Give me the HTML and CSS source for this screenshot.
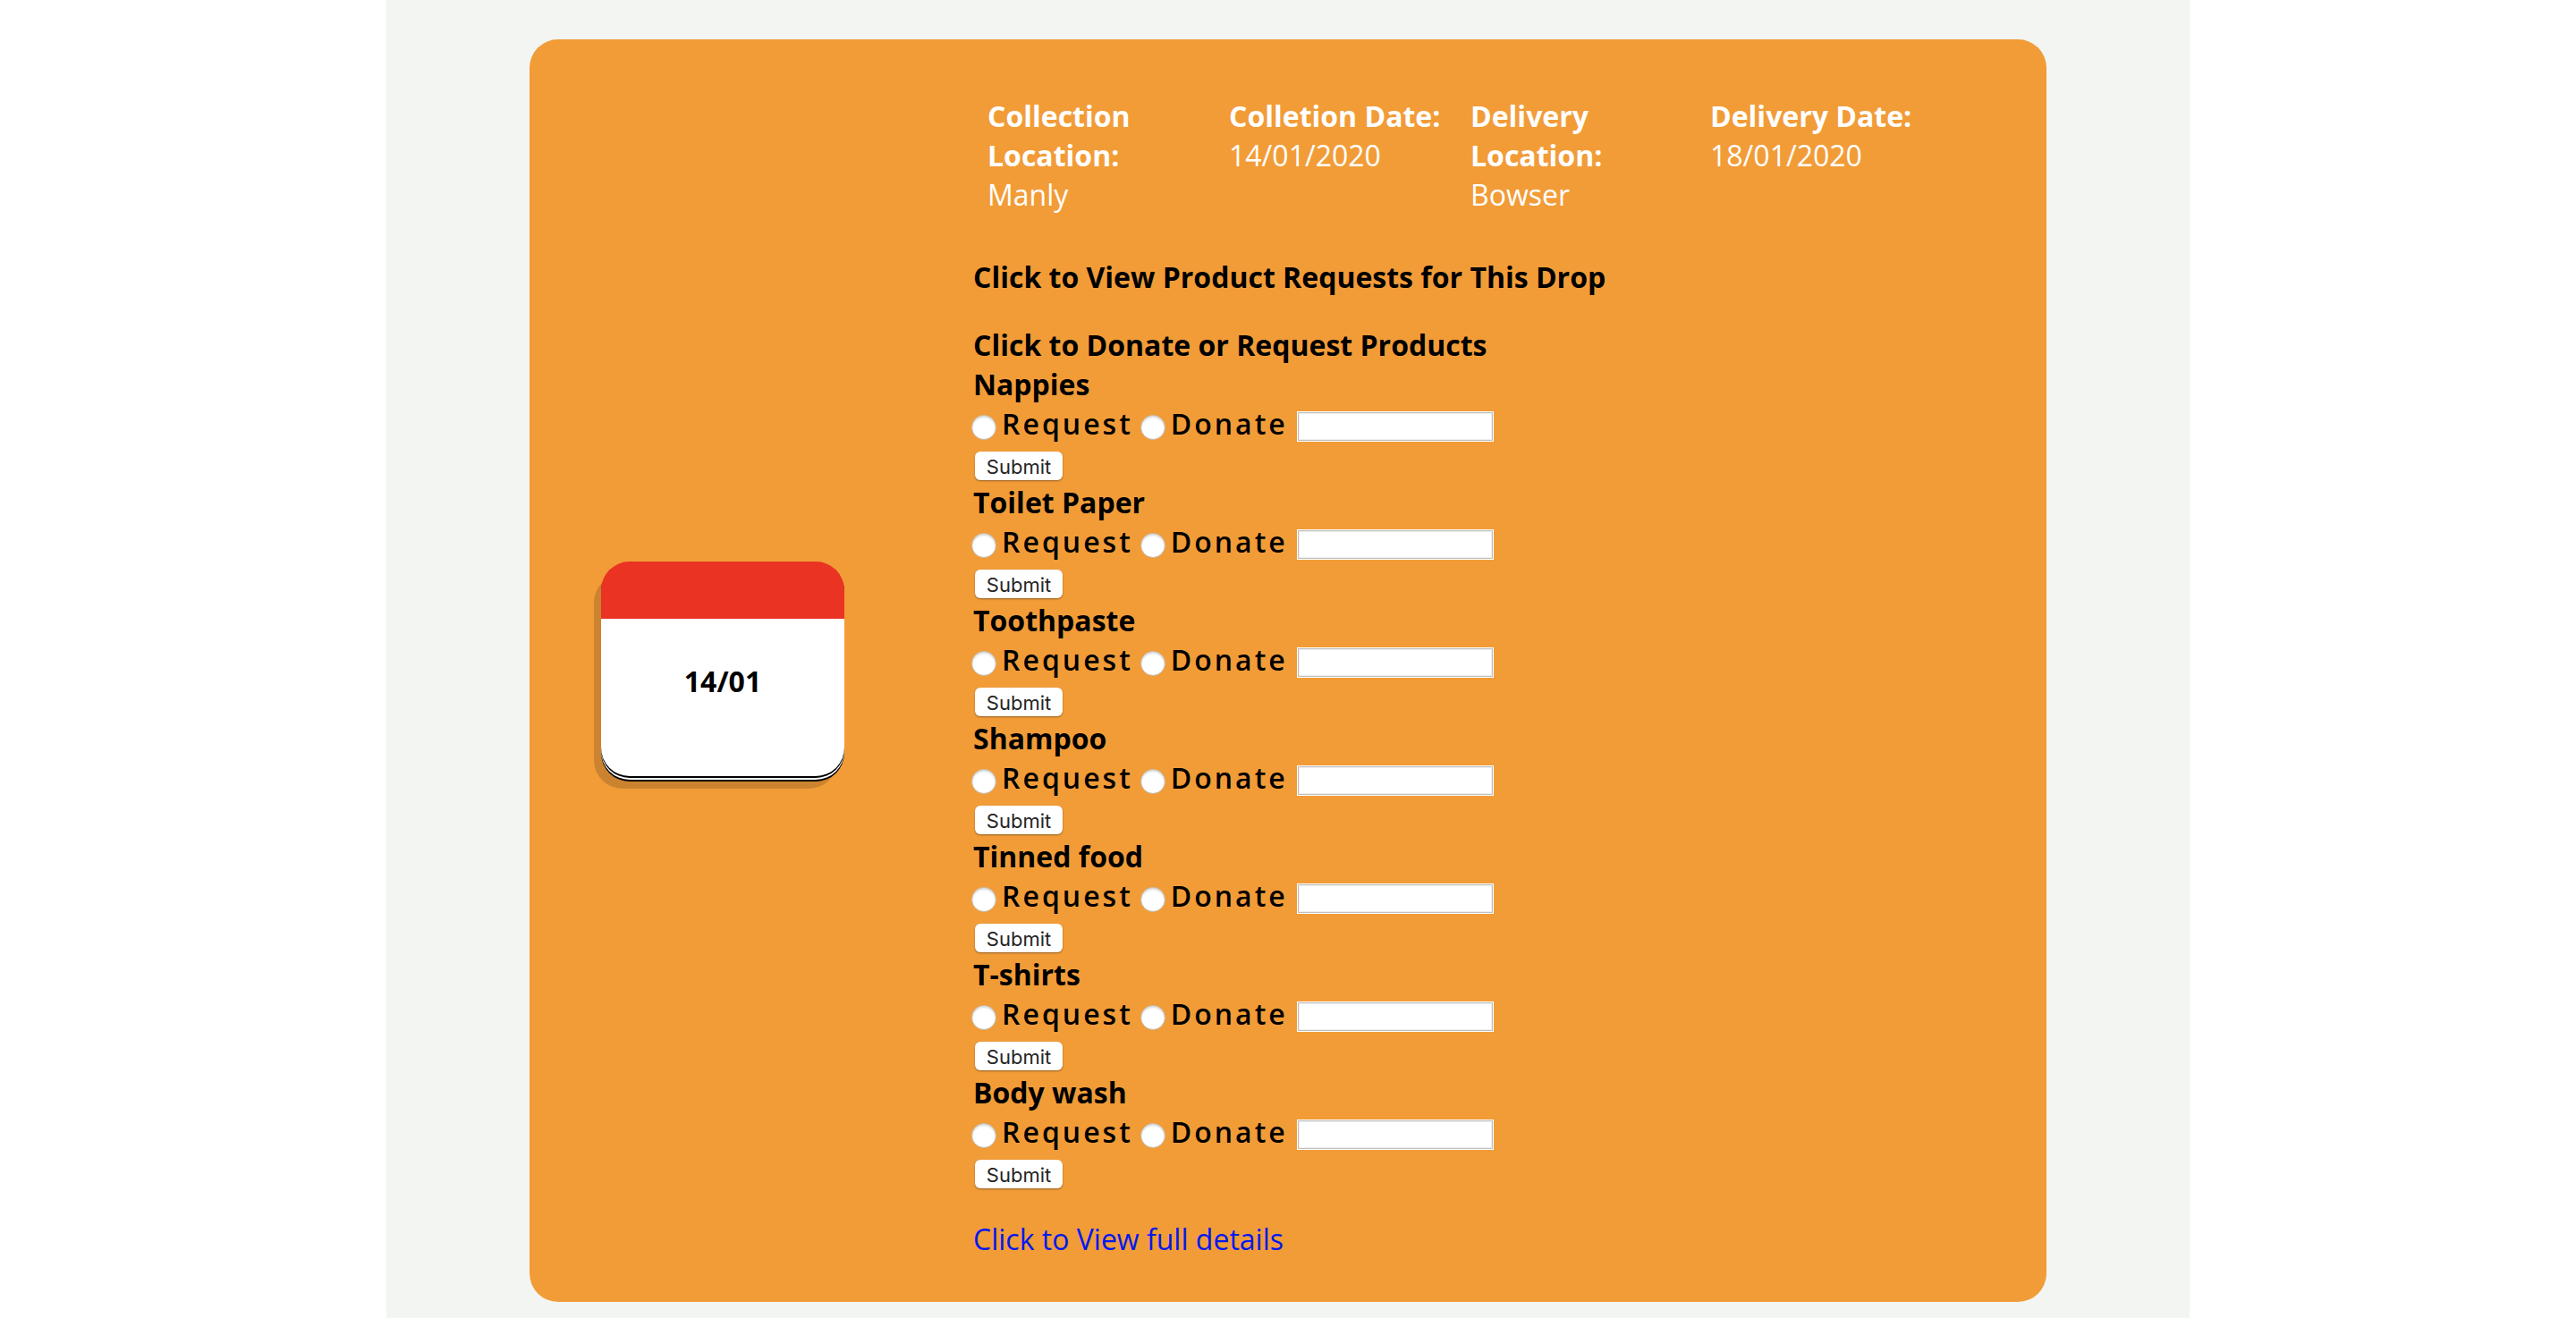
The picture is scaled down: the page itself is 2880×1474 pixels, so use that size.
FILE: index.html
```html
<!DOCTYPE html>
<html lang="en">
<head>
<meta charset="utf-8">
<title>Drop details</title>
<link rel="stylesheet" href="styles.css">
</head>
<body>
<main class="page">
  <article class="drop">
    <time class="calendar" datetime="2020-01-14">14/01</time>
    <div class="details">
      <dl class="summary">
        <div class="summary-item"><dt>Collection Location:</dt><dd>Manly</dd></div>
        <div class="summary-item"><dt>Colletion Date:</dt><dd>14/01/2020</dd></div>
        <div class="summary-item"><dt>Delivery Location:</dt><dd>Bowser</dd></div>
        <div class="summary-item"><dt>Delivery Date:</dt><dd>18/01/2020</dd></div>
      </dl>
      <button class="toggle toggle-requests" type="button">Click to View Product Requests for This Drop</button>
      <button class="toggle" type="button">Click to Donate or Request Products</button>
      <form class="product">
        <h3 class="product-name">Nappies</h3>
        <div class="choices">
          <label class="choice"><input class="radio" type="radio" name="action">Request</label>
          <label class="choice"><input class="radio" type="radio" name="action">Donate</label>
          <input class="amount" type="text" aria-label="Nappies quantity">
        </div>
        <button class="submit" type="submit">Submit</button>
      </form>
      <form class="product">
        <h3 class="product-name">Toilet Paper</h3>
        <div class="choices">
          <label class="choice"><input class="radio" type="radio" name="action">Request</label>
          <label class="choice"><input class="radio" type="radio" name="action">Donate</label>
          <input class="amount" type="text" aria-label="Toilet Paper quantity">
        </div>
        <button class="submit" type="submit">Submit</button>
      </form>
      <form class="product">
        <h3 class="product-name">Toothpaste</h3>
        <div class="choices">
          <label class="choice"><input class="radio" type="radio" name="action">Request</label>
          <label class="choice"><input class="radio" type="radio" name="action">Donate</label>
          <input class="amount" type="text" aria-label="Toothpaste quantity">
        </div>
        <button class="submit" type="submit">Submit</button>
      </form>
      <form class="product">
        <h3 class="product-name">Shampoo</h3>
        <div class="choices">
          <label class="choice"><input class="radio" type="radio" name="action">Request</label>
          <label class="choice"><input class="radio" type="radio" name="action">Donate</label>
          <input class="amount" type="text" aria-label="Shampoo quantity">
        </div>
        <button class="submit" type="submit">Submit</button>
      </form>
      <form class="product">
        <h3 class="product-name">Tinned food</h3>
        <div class="choices">
          <label class="choice"><input class="radio" type="radio" name="action">Request</label>
          <label class="choice"><input class="radio" type="radio" name="action">Donate</label>
          <input class="amount" type="text" aria-label="Tinned food quantity">
        </div>
        <button class="submit" type="submit">Submit</button>
      </form>
      <form class="product">
        <h3 class="product-name">T-shirts</h3>
        <div class="choices">
          <label class="choice"><input class="radio" type="radio" name="action">Request</label>
          <label class="choice"><input class="radio" type="radio" name="action">Donate</label>
          <input class="amount" type="text" aria-label="T-shirts quantity">
        </div>
        <button class="submit" type="submit">Submit</button>
      </form>
      <form class="product">
        <h3 class="product-name">Body wash</h3>
        <div class="choices">
          <label class="choice"><input class="radio" type="radio" name="action">Request</label>
          <label class="choice"><input class="radio" type="radio" name="action">Donate</label>
          <input class="amount" type="text" aria-label="Body wash quantity">
        </div>
        <button class="submit" type="submit">Submit</button>
      </form>
      <a class="full-details" href="#details">Click to View full details</a>
    </div>
  </article>
</main>
</body>
</html>
```
FILE: styles.css
```css
* {
  box-sizing: border-box;
}

body {
  margin: 0;
  background: #fff;
  color: #000;
  font: 32px/44px "Open Sans", sans-serif;
}

.page {
  width: 70%;
  min-height: 100vh;
  margin: 0 auto;
  padding: 44px 160px 18px;
  background: #f3f5f2;
}

.drop {
  display: flex;
  align-items: center;
  gap: 144px;
  padding: 64px 80px 48px;
  border-radius: 32px;
  background: #f29c38;
}

.calendar {
  flex: none;
  width: 272px;
  height: 240px;
  margin-bottom: 20px;
  padding-top: 48px;
  border-top: 64px solid #ea3323;
  border-radius: 32px;
  background: #fff;
  box-shadow: 0 2px #000, 0 4px #fff, 0 6px #000, -8px 14px rgba(0, 0, 0, 0.16);
  font-weight: 700;
  text-align: center;
}

.details {
  display: flex;
  flex: 1;
  flex-direction: column;
  align-items: flex-start;
}

.summary {
  display: grid;
  grid-template-columns: 270px 270px 268px auto;
  margin: 0 0 48px;
  padding-left: 16px;
  color: #fff;
}

.summary-item {
  padding-right: 16px;
}

.summary dt {
  font-weight: 700;
}

.summary dd {
  margin: 0;
}

.toggle {
  padding: 0;
  border: 0;
  background: none;
  color: inherit;
  font: inherit;
  font-weight: 700;
  text-align: left;
}

.toggle-requests {
  margin-bottom: 32px;
}

.product-name {
  margin: 0;
  font-size: 32px;
  font-weight: 700;
}

.choices {
  display: flex;
  align-items: center;
}

.choice {
  display: flex;
  align-items: center;
  font-weight: 600;
  letter-spacing: 3px;
}

.radio {
  appearance: none;
  width: 28px;
  height: 28px;
  margin: 8px 6px 0 -2px;
  border: 1px solid #c3b6a5;
  border-radius: 50%;
  background: #fff;
  box-shadow: inset 0 2px 2px #ddd;
}

.choice + .choice {
  margin-left: 10px;
}

.amount {
  width: 220px;
  height: 34px;
  margin: 6px 0 0 10px;
  padding: 2px 4px;
  border: 1px solid #fff;
  background: #fff;
  box-shadow: inset 0 0 0 1px #bfbfbf, inset 0 0 0 2px #eee;
  font: 22px Inter, sans-serif;
}

.submit {
  display: block;
  width: 98px;
  height: 32px;
  margin: 9px 2px 3px;
  padding: 2px 0 0;
  border: 0;
  border-radius: 6px;
  background: #fff;
  box-shadow: 0 1px 2px rgba(0, 0, 0, 0.4);
  color: #252525;
  font: 22px/30px Inter, sans-serif;
}

.full-details {
  margin-top: 32px;
  color: #0019ee;
  text-decoration: none;
}
```
